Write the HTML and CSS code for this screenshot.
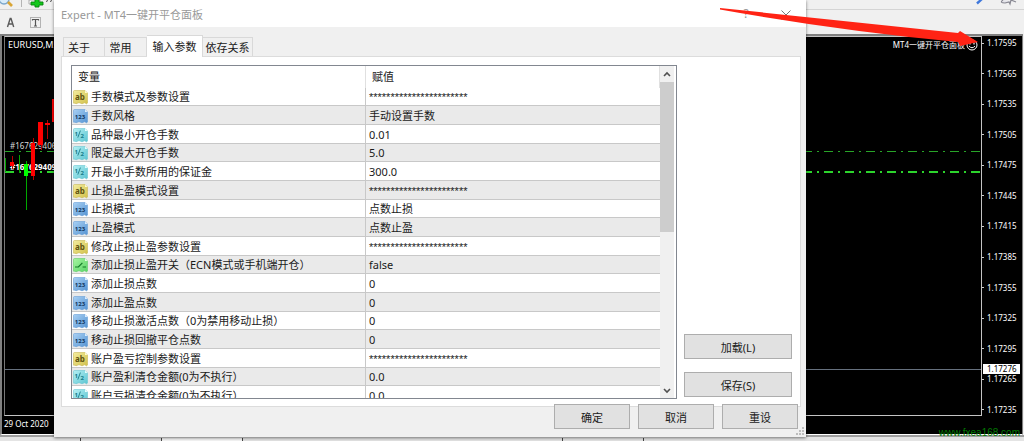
FILE: index.html
```html
<!DOCTYPE html>
<html lang="zh-CN">
<head>
<meta charset="utf-8">
<meta name="viewport" content="width=device-width, initial-scale=1">
<title>Expert - MT4一键开平仓面板</title>
<link rel="stylesheet" href="styles.css">
</head>
<body>
<svg class="defs" aria-hidden="true">
  <defs>
    <linearGradient id="g-yellow" x1="0" y1="0" x2="1" y2="1"><stop offset="0" stop-color="#f3eda0"/><stop offset="1" stop-color="#d2c04a"/></linearGradient>
    <linearGradient id="g-blue" x1="0" y1="0" x2="1" y2="1"><stop offset="0" stop-color="#a8d0f4"/><stop offset="1" stop-color="#5694d2"/></linearGradient>
    <linearGradient id="g-cyan" x1="0" y1="0" x2="1" y2="1"><stop offset="0" stop-color="#b4f0f4"/><stop offset="1" stop-color="#5cc4d0"/></linearGradient>
    <linearGradient id="g-green" x1="0" y1="0" x2="1" y2="1"><stop offset="0" stop-color="#a6f4a0"/><stop offset="1" stop-color="#58d468"/></linearGradient>
    <path id="tag" d="M.5 1.5 Q.5.5 1.5.5 H12 L14.5 3 V13 Q13.5 14.6 12.5 13.2 Q11.5 12.4 10.5 13.2 Q9 14.4 7.5 13.2 Q6 12.2 4.5 13.2 Q3 14.2 2 13.2 L.5 13.2 Z"/>
    <symbol id="i-ab" viewBox="0 0 15 14"><use href="#tag" fill="url(#g-yellow)" stroke="#c9b957" stroke-width=".6"/><path d="M12 .5V3h2.5z" fill="#fffbd0"/><text x="7" y="10" class="tag-text tag-ab">ab</text></symbol>
    <symbol id="i-int" viewBox="0 0 15 14"><use href="#tag" fill="url(#g-blue)" stroke="#689fd8" stroke-width=".6"/><path d="M12 .5V3h2.5z" fill="#dceeff"/><text x="7" y="10" class="tag-text tag-int">123</text></symbol>
    <symbol id="i-real" viewBox="0 0 15 14"><use href="#tag" fill="url(#g-cyan)" stroke="#6cc8d4" stroke-width=".6"/><path d="M12 .5V3h2.5z" fill="#e4ffff"/><path d="M7.4 2.6L4.8 9.6" stroke="#167a88" stroke-width=".9"/><text x="3.2" y="7.5" class="tag-text tag-real">1</text><text x="9.3" y="9.8" class="tag-text tag-real">2</text></symbol>
    <symbol id="i-bool" viewBox="0 0 15 14"><use href="#tag" fill="url(#g-green)" stroke="#62cc68" stroke-width=".6"/><path d="M12 .5V3h2.5z" fill="#e4ffe0"/><path d="M2 9h3.4l4-4.2M9.6 9H13" fill="none" stroke="#127a28" stroke-width="1.2"/></symbol>
  </defs>
</svg>

<div class="desktop">
  <header class="toolbar">
    <div class="toolbar-row toolbar-top">
      <svg class="tool-icons" width="54" height="10" viewBox="0 0 54 10" aria-hidden="true">
        <circle cx="4" cy="-1" r="5" fill="#d8ecfa" stroke="#7ba7cc" stroke-width="1.4"/>
        <path d="M8 2l4 4" stroke="#d9a535" stroke-width="2.6"/>
        <path d="M21.500 0V7" stroke="#b4b4b4"/>
        <path d="M29 0h11v4H29z" fill="#fff" stroke="#9a9a9a" stroke-width=".8"/>
        <path d="M35-1h4v3h4v3h-4v2h-4V5h-4V2h4z" fill="#13c81c" stroke="#07840e" stroke-width=".9"/>
        <path d="M46 1.500l2-1M50 1.500l2-1" stroke="#444"/>
      </svg>
      <svg class="tool-icons" width="54" height="10" viewBox="0 0 54 10" aria-hidden="true">
        <path d="M7 3.500L13-2" stroke="#3f78dc" stroke-width="2.400"/>
        <path d="M33 0q-4 3 2 3l4-1 1 2 1-4 5 2" fill="#e4e4ea" stroke="#888892" stroke-width="1.200"/>
      </svg>
    </div>
    <div class="toolbar-row">
      <svg width="54" height="23" viewBox="0 0 54 23" aria-hidden="true">
        <path d="M7.500 17L10.200 8.500H11L13.700 17M8.500 14h4.300" fill="none" stroke="#5a5a5a" stroke-width="1.400"/>
        <rect x="30.500" y="7.500" width="10" height="10" fill="none" stroke="#777" stroke-dasharray="1 1"/>
        <path d="M32.500 10.500v-1h6v1M35.500 9.500V16M34 16h3" fill="none" stroke="#555" stroke-width="1.200"/>
      </svg>
    </div>
  </header>

  <main class="chart">
    <div class="plot">
      <svg class="plot-art" aria-hidden="true">
        <line x1="0" x2="100%" y1="114.500" y2="114.500" class="order-line"/>
        <line x1="0" x2="100%" y1="135" y2="135" class="order-line order-line-strong"/>
        <line x1="0" x2="100%" y1="332.500" y2="332.500" class="bid-line"/>
        <text x="5" y="112" class="order-text">#167629406</text>
        <text x="5" y="133" class="order-text order-text-strong">#167629409</text>
        <g class="up"><path d="M.5 121v14M14.500 118v18M21.500 124v49"/><rect x="19" y="127" width="4" height="12"/></g>
        <g class="down"><path d="M7.500 119v13M28.500 101v42M36.500 85v28M42.500 83v19"/><rect x="5" y="125" width="4" height="4"/><rect x="26" y="106" width="4" height="33"/><rect x="33" y="85" width="5" height="23"/><rect x="40" y="86" width="5" height="2"/><rect x="47" y="62" width="4" height="23"/></g>
      </svg>
      <div class="plot-head">
        <span>EURUSD,M5</span>
        <span class="expert-name">MT4一键开平仓面板
          <svg width="12" height="12" viewBox="0 0 12 12" aria-hidden="true"><g fill="none" stroke="#fff"><circle cx="6" cy="6" r="5"/><path d="M3 7q3 3.500 6 0"/></g><path d="M4 3.500v2M8 3.500v2" stroke="#fff" stroke-width="1.200"/></svg>
        </span>
      </div>
    </div>
    <div class="axis">
      <span>1.17595</span><span>1.17565</span><span>1.17535</span><span>1.17505</span><span>1.17475</span><span>1.17445</span><span>1.17415</span><span>1.17385</span><span>1.17355</span><span>1.17325</span><span>1.17295</span><span>1.17265</span><span>1.17235</span>
      <b class="bid">1.17276</b>
    </div>
    <div class="dates">29 Oct 2020</div>
  </main>
  <footer class="strip"><i></i><i></i><i class="current"></i><i class="wide"></i><i></i></footer>
  <div class="watermark">www.fxea168.com</div>
</div>

<section class="dialog" role="dialog" aria-labelledby="dialog-title">
  <div class="titlebar">
    <h1 id="dialog-title">Expert - MT4一键开平仓面板</h1>
    <button type="button" class="caption" aria-label="帮助">?</button>
    <button type="button" class="caption" aria-label="关闭"><svg width="10" height="10" viewBox="0 0 10 10"><path d="M.5.5l9 9M9.500.5l-9 9" stroke="#777"/></svg></button>
  </div>
  <div class="dialog-body">
    <div class="tabs" role="tablist">
      <button type="button" role="tab" class="tab">关于</button>
      <button type="button" role="tab" class="tab">常用</button>
      <button type="button" role="tab" class="tab active" aria-selected="true">输入参数</button>
      <button type="button" role="tab" class="tab">依存关系</button>
    </div>
    <div class="pane">
      <div class="grid-box">
        <div class="grid-view">
          <table class="params">
            <colgroup><col class="col-name"><col></colgroup>
            <thead><tr><th>变量</th><th>赋值</th></tr></thead>
            <tbody>
              <tr><td><svg class="ico"><use href="#i-ab"/></svg>手数模式及参数设置</td><td class="stars">***********************</td></tr>
              <tr><td><svg class="ico"><use href="#i-int"/></svg>手数风格</td><td>手动设置手数</td></tr>
              <tr><td><svg class="ico"><use href="#i-real"/></svg>品种最小开仓手数</td><td>0.01</td></tr>
              <tr><td><svg class="ico"><use href="#i-real"/></svg>限定最大开仓手数</td><td>5.0</td></tr>
              <tr><td><svg class="ico"><use href="#i-real"/></svg>开最小手数所用的保证金</td><td>300.0</td></tr>
              <tr><td><svg class="ico"><use href="#i-ab"/></svg>止损止盈模式设置</td><td class="stars">***********************</td></tr>
              <tr><td><svg class="ico"><use href="#i-int"/></svg>止损模式</td><td>点数止损</td></tr>
              <tr><td><svg class="ico"><use href="#i-int"/></svg>止盈模式</td><td>点数止盈</td></tr>
              <tr><td><svg class="ico"><use href="#i-ab"/></svg>修改止损止盈参数设置</td><td class="stars">***********************</td></tr>
              <tr><td><svg class="ico"><use href="#i-bool"/></svg>添加止损止盈开关（ECN模式或手机端开仓）</td><td>false</td></tr>
              <tr><td><svg class="ico"><use href="#i-int"/></svg>添加止损点数</td><td>0</td></tr>
              <tr><td><svg class="ico"><use href="#i-int"/></svg>添加止盈点数</td><td>0</td></tr>
              <tr><td><svg class="ico"><use href="#i-int"/></svg>移动止损激活点数（0为禁用移动止损）</td><td>0</td></tr>
              <tr><td><svg class="ico"><use href="#i-int"/></svg>移动止损回撤平仓点数</td><td>0</td></tr>
              <tr><td><svg class="ico"><use href="#i-ab"/></svg>账户盈亏控制参数设置</td><td class="stars">***********************</td></tr>
              <tr><td><svg class="ico"><use href="#i-real"/></svg>账户盈利清仓金额(0为不执行）</td><td>0.0</td></tr>
              <tr><td><svg class="ico"><use href="#i-real"/></svg>账户亏损清仓金额(0为不执行）</td><td>0.0</td></tr>
            </tbody>
          </table>
        </div>
        <div class="scrollbar" aria-hidden="true">
          <svg width="14" height="16" viewBox="0 0 14 16"><path d="M4 10l3-3 3 3" fill="none" stroke="#505050" stroke-width="1.600"/></svg>
          <div class="track"><div class="thumb"></div></div>
          <svg width="14" height="16" viewBox="0 0 14 16"><path d="M4 7l3 3 3-3" fill="none" stroke="#505050" stroke-width="1.600"/></svg>
        </div>
      </div>
      <div class="side">
        <button type="button" class="btn">加载(L)</button>
        <button type="button" class="btn">保存(S)</button>
      </div>
    </div>
    <div class="actions">
      <button type="button" class="btn">确定</button>
      <button type="button" class="btn">取消</button>
      <button type="button" class="btn">重设</button>
    </div>
  </div>
  <svg class="grip" width="8" height="8" viewBox="0 0 8 8" aria-hidden="true"><path d="M6 0h2v2H6zM3 3h2v2H3zM6 3h2v2H6zM0 6h2v2H0zM3 6h2v2H3zM6 6h2v2H6z" fill="#bdbdbd"/></svg>
</section>

<svg class="arrow" width="260" height="42" viewBox="0 0 260 42" aria-hidden="true"><path d="M0 0L238 25 240 23 258 34 240 38 238 34Q120 23 0 1.500Z" fill="#ff2314"/></svg>
</body>
</html>
```

FILE: styles.css
```css
* { box-sizing: border-box; }

body {
  margin: 0;
  position: relative;
  min-height: 100vh;
  overflow: hidden;
  display: flex;
  background: #f0f0f0;
  font-family: "Noto Sans", "Noto Sans CJK SC", sans-serif;
  font-size: 11px;
  color: #1a1a1a;
}

button {
  font: inherit;
  color: inherit;
  padding: 0;
  border: 0;
  background: none;
}

.defs { position: absolute; width: 0; height: 0; }

/* Terminal behind the dialog */
.desktop {
  flex: 1;
  position: relative;
  display: flex;
  flex-direction: column;
}

.toolbar { height: 34px; }
.toolbar-row { height: 23px; display: flex; justify-content: space-between; }
.toolbar-top { height: 10px; overflow: hidden; border-bottom: 1px solid #d4d4d4; }
.toolbar svg { display: block; }

.chart {
  flex: 1;
  display: grid;
  grid-template-columns: 1fr 40px;
  grid-template-rows: 1fr 17px;
  margin-right: 1px;
  padding-left: 2px;
  background: #000;
  border: solid #808080;
  border-width: 2px 1px 1px 2px;
  border-bottom-color: #fff;
  color: #fff;
  font-size: 8px;
}

.plot {
  position: relative;
  margin-bottom: 1px;
  border: 1px solid #c4c4c4;
  border-left-color: #777;
}

.plot-art { position: absolute; inset: 0; width: 100%; height: 100%; }

.plot-head {
  position: relative;
  display: flex;
  justify-content: space-between;
  padding: 1px 3px 0 3px;
  line-height: 14px;
  font-size: 9px;
}

.expert-name { display: flex; align-items: center; gap: 1px; font-size: 8px; }

.order-line { stroke: #28a428; stroke-dasharray: 9 5 2 5; }
.order-line-strong { stroke: #2cd42c; stroke-width: 2; }
.bid-line { stroke: #66707e; }
.order-text { fill: #d8d8d8; }
.order-text-strong { fill: #fff; font-weight: 700; }
.up path { stroke: #00a800; }
.up rect { fill: #0f0; }
.down path { stroke: #b40000; }
.down rect { fill: #f00; }

.axis {
  position: relative;
  display: flex;
  flex-direction: column;
  justify-content: space-between;
  line-height: 14px;
}

.axis span { display: flex; align-items: center; gap: 3px; }
.axis span::before { content: ""; width: 2px; height: 1px; background: #ccc; }

.bid {
  position: absolute;
  left: 1px;
  right: 2px;
  bottom: 43px;
  padding-left: 4px;
  line-height: 10px;
  background: #fff;
  color: #000;
  font-weight: 400;
}

.dates { line-height: 14px; }

.strip {
  height: 6px;
  display: flex;
  padding-top: 1px;
  background: #e4e4e4;
  border-top: 2px solid #a0a0a0;
}

.strip i { width: 81px; border-right: 1px solid #444; }
.strip .current { background: #f6f6f6; }
.strip .wide { width: 320px; }

.watermark {
  position: absolute;
  right: 4px;
  bottom: 1px;
  line-height: 14px;
  font-family: "Liberation Sans", Arial, sans-serif;
  font-size: 10px;
  color: #007a00;
}

/* Expert settings window */
.dialog {
  position: absolute;
  top: 0;
  bottom: 4px;
  left: 54px;
  right: 218px;
  display: flex;
  flex-direction: column;
  background: #f0f0f0;
  box-shadow: 0 1px 3px #00000080;
}

.titlebar {
  display: flex;
  align-items: center;
  height: 27px;
  padding-left: 7px;
  background: #fff;
  color: #999;
}

.titlebar h1 { flex: 1; margin: 0; font-size: 11px; font-weight: 400; }
.caption { width: 40px; height: 27px; font-size: 12px; }
.caption svg { vertical-align: middle; }

.dialog-body {
  flex: 1;
  min-height: 0;
  display: flex;
  flex-direction: column;
  padding: 8px 5px 8px 7px;
}

.tabs { display: flex; align-items: flex-end; padding-left: 2px; }

.tab {
  width: 42px;
  height: 19px;
  padding-right: 10px;
  border: 1px solid #d9d9d9;
  border-width: 1px 1px 0 0;
}

.tab:first-child { border-left-width: 1px; }
.tab:last-child { width: 50px; padding: 0; }

.tab.active {
  width: 56px;
  height: 22px;
  margin-bottom: -1px;
  padding: 0 0 2px;
  background: #fff;
  position: relative;
}

.pane {
  flex: 1;
  min-height: 0;
  display: flex;
  gap: 7px;
  padding: 8px 8px 7px 9px;
  background: #fff;
  border: 1px solid #dcdcdc;
}

.grid-box {
  flex: 1;
  display: flex;
  min-height: 0;
  padding-right: 2px;
  border: 1px solid #828790;
}

.grid-view { flex: 1; overflow: hidden; }

.params {
  width: 100%;
  table-layout: fixed;
  border-collapse: separate;
  border-spacing: 0;
  line-height: 16px;
}

.col-name { width: 50%; }

.params th {
  height: 22px;
  padding: 0 6px;
  text-align: left;
  font-weight: 400;
  border-right: 1px solid #e0e0e0;
}

.params td {
  height: 19px;
  padding: 1px 0 0 3px;
  white-space: nowrap;
  border-bottom: 1px solid #c8c8c8;
}

.params td:first-child { padding-left: 1px; border-right: 1px solid #c8c8c8; }
.params tr:nth-child(3n + 1) td { height: 18px; }
.params tr:nth-child(even) { background: #eaeaea; }
.params .stars { font-family: "Liberation Sans", Arial, sans-serif; }

.ico { width: 15px; height: 16px; margin-right: 3px; vertical-align: top; }
.tag-text { text-anchor: middle; font-weight: 700; }
.tag-ab { font-size: 8px; fill: #5e5310; }
.tag-int { font-size: 6px; fill: #10355e; }
.tag-real { font-size: 6px; fill: #167a88; }

.scrollbar { width: 14px; display: flex; flex-direction: column; background: #f0f0f0; }
.track { flex: 1; }
.thumb { height: 50%; background: #cdcdcd; }

.side {
  width: 108px;
  display: flex;
  flex-direction: column;
  justify-content: flex-end;
  gap: 13px;
  padding-bottom: 2px;
}

.btn {
  height: 25px;
  background: #e1e1e1;
  border: 1px solid #adadad;
}

.actions {
  display: flex;
  justify-content: flex-end;
  gap: 8px;
  margin-top: -3px;
  padding-right: 3px;
}

.actions .btn { width: 76px; }

.grip { position: absolute; right: 2px; bottom: 2px; }

.arrow { position: absolute; left: 720px; top: 8px; }
```
